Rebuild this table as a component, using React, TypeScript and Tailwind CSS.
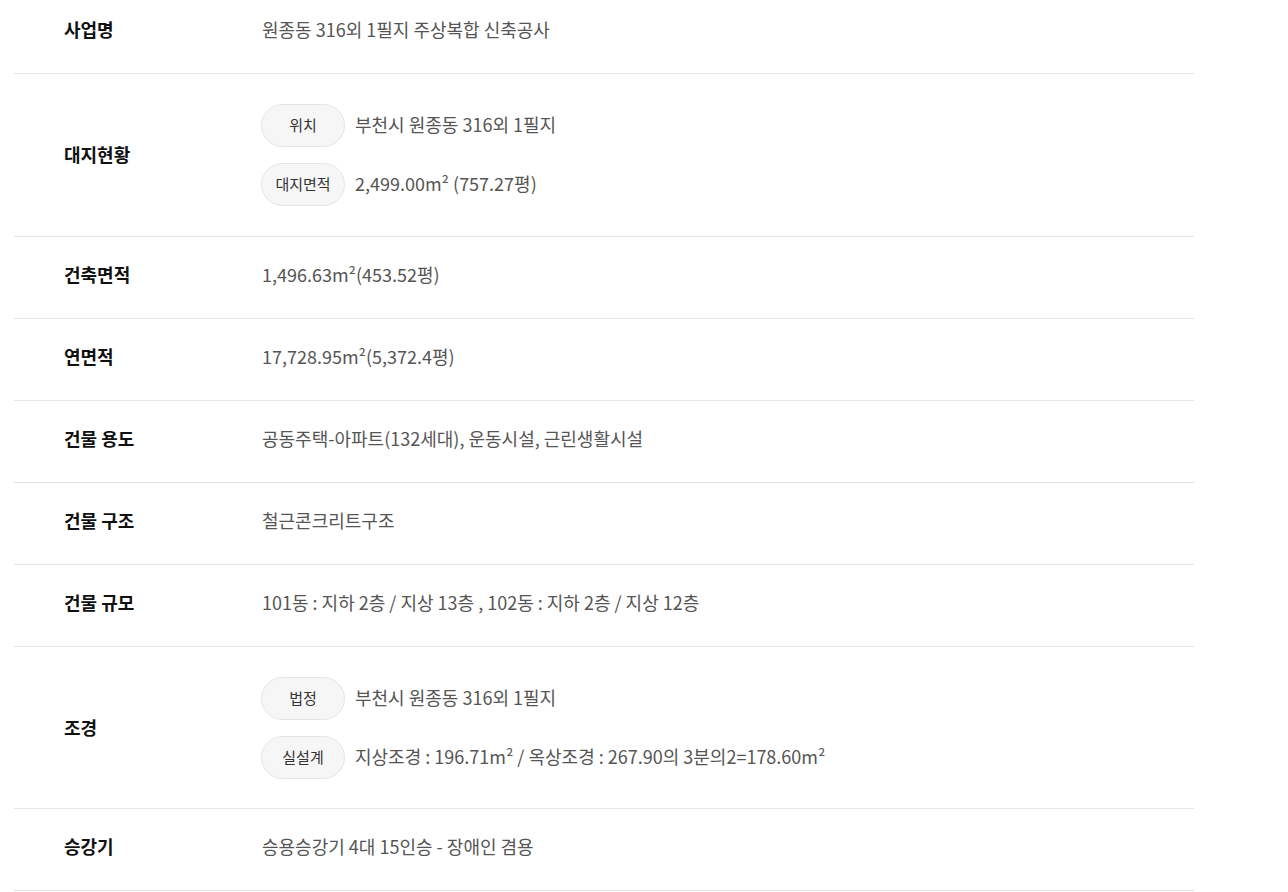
import React from "react";

type Sub = { tag: string; text: string };
type Row = { label: string; value?: string; subs?: Sub[]; tight?: boolean };

const rows: Row[] = [
  { label: "사업명", value: "원종동 316외 1필지 주상복합 신축공사" },
  {
    label: "대지현황",
    subs: [
      { tag: "위치", text: "부천시 원종동 316외 1필지" },
      { tag: "대지면적", text: "2,499.00m² (757.27평)" },
    ],
  },
  { label: "건축면적", value: "1,496.63m²(453.52평)" },
  { label: "연면적", value: "17,728.95m²(5,372.4평)" },
  { label: "건물 용도", value: "공동주택-아파트(132세대), 운동시설, 근린생활시설" },
  { label: "건물 구조", value: "철근콘크리트구조" },
  { label: "건물 규모", value: "101동 : 지하 2층 / 지상 13층 , 102동 : 지하 2층 / 지상 12층" },
  {
    label: "조경",
    tight: true,
    subs: [
      { tag: "법정", text: "부천시 원종동 316외 1필지" },
      { tag: "실설계", text: "지상조경 : 196.71m² / 옥상조경 : 267.90의 3분의2=178.60m²" },
    ],
  },
  { label: "승강기", value: "승용승강기 4대 15인승 - 장애인 겸용" },
];

export default function App() {
  return (
    <div className="min-h-screen bg-white overflow-hidden font-['Noto_Sans_CJK_KR',sans-serif]">
      <div className="ml-[14px] w-[1180px] -mt-[8px]">
        {rows.map((row) => (
          <div
            key={row.label}
            className={`flex items-center border-b border-[#e5e5e5] ${
              row.subs
                ? row.tight
                  ? "pt-[30px] pb-[29px]"
                  : "py-[30px]"
                : "h-[82px] pb-[8px]"
            }`}
          >
            <div
              className={`w-[198px] ml-[50px] shrink-0 text-[18px] leading-[26px] font-bold text-[#111] ${
                row.subs ? "pb-[3px]" : ""
              }`}
            >
              {row.label}
            </div>
            {row.value && (
              <div className="text-[18px] leading-[26px] text-[#555]">{row.value}</div>
            )}
            {row.subs && (
              <div className="flex flex-col gap-4 -ml-px">
                {row.subs.map((s) => (
                  <div key={s.tag} className="flex items-center gap-[10px]">
                    <span className="flex h-[43px] w-[84px] items-center justify-center rounded-full border border-[#e5e5e5] bg-[#f6f6f6] text-[15px] text-[#333]">
                      {s.tag}
                    </span>
                    <span className="pb-[4px] text-[18px] leading-[26px] text-[#555]">{s.text}</span>
                  </div>
                ))}
              </div>
            )}
          </div>
        ))}
      </div>
    </div>
  );
}
